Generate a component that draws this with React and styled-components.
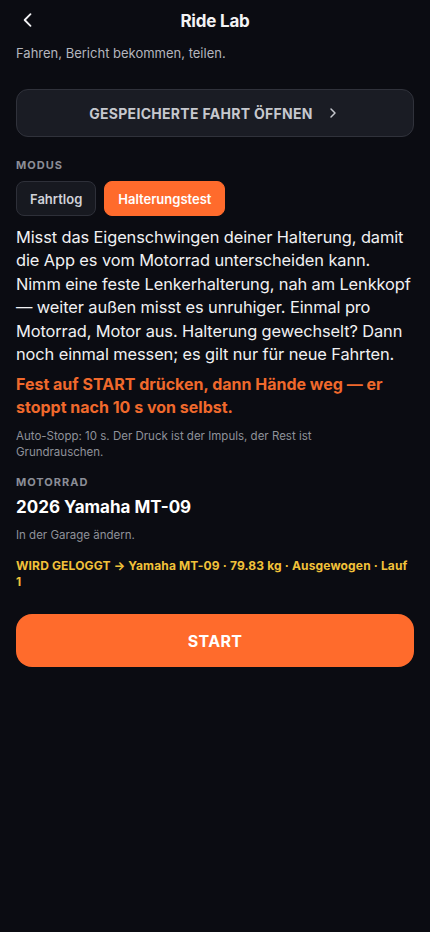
import styled, { createGlobalStyle } from "styled-components";

const Global = createGlobalStyle`
  html, body {
    margin: 0;
    padding: 0;
    background: #0b0c12;
  }
  body {
    font-family: Inter, "Noto Sans", sans-serif;
    color: #f3f3f5;
  }
`;

const Screen = styled.main`
  min-height: 932px;
  background: #0b0c12;
  padding: 0 16px;
  box-sizing: border-box;
`;

const Header = styled.header`
  height: 41px;
  display: flex;
  align-items: center;
  justify-content: center;
  position: relative;
`;

const Back = styled.button`
  position: absolute;
  left: 2px;
  top: 9px;
  width: 20px;
  height: 22px;
  padding: 0;
  border: 0;
  background: none;
  color: #f3f3f5;
  display: flex;
  align-items: center;
`;

const HeaderTitle = styled.h1`
  margin: 0;
  font-size: 17px;
  font-weight: 700;
  letter-spacing: -0.2px;
`;

const Subtitle = styled.p`
  margin: 4px 0 0;
  font-size: 13px;
  color: #b4b6be;
`;

const OpenButton = styled.button`
  margin-top: 28px;
  width: 100%;
  height: 48px;
  border-radius: 12px;
  border: 1px solid #30323b;
  background: #1a1c24;
  color: #c6c8ce;
  font-family: inherit;
  font-size: 14px;
  font-weight: 700;
  letter-spacing: 0.3px;
  display: flex;
  align-items: center;
  justify-content: center;
  gap: 12px;
`;

const Label = styled.div`
  margin-top: ${(p) => p.$top}px;
  font-size: 11px;
  font-weight: 700;
  letter-spacing: 1px;
  color: #8b8e97;
`;

const Chips = styled.div`
  margin-top: 9px;
  display: flex;
  gap: 8px;
`;

const Chip = styled.button`
  height: 35px;
  padding: 0 13px;
  border-radius: 8px;
  font-family: inherit;
  font-size: 13px;
  font-weight: 600;
  border: 1px solid ${(p) => (p.$active ? "#ff6b2c" : "#2e3039")};
  background: ${(p) => (p.$active ? "#ff6b2c" : "#171920")};
  color: ${(p) => (p.$active ? "#ffffff" : "#d0d2d8")};
`;

const Body = styled.p`
  margin: 10px 0 0;
  font-size: 16.4px;
  line-height: 23.4px;
  color: #f1f1f3;
  letter-spacing: -0.1px;
`;

const Warning = styled.p`
  margin: 7px 0 0;
  font-size: 16px;
  line-height: 23px;
  font-weight: 700;
  color: #f0692c;
`;

const Note = styled.p`
  margin: 9px 0 0;
  max-width: 340px;
  font-size: 11.5px;
  line-height: 16px;
  color: #8f929a;
`;

const Bike = styled.h2`
  margin: 8px 0 0;
  font-size: 17px;
  font-weight: 700;
  color: #ffffff;
`;

const Hint = styled(Note)`
  margin-top: 10px;
`;

const Logged = styled.p`
  margin: 15px 0 0;
  font-size: 12px;
  line-height: 16px;
  font-weight: 700;
  letter-spacing: 0.15px;
  color: #f2c23a;
`;

const StartButton = styled.button`
  margin-top: 24px;
  width: 100%;
  height: 53px;
  border: 0;
  border-radius: 16px;
  background: #ff6b2c;
  color: #ffffff;
  font-family: inherit;
  font-size: 16px;
  font-weight: 700;
  letter-spacing: 0.3px;
`;

function Chevron({ dir = "left", size = 20 }) {
  const d = dir === "left" ? "M15 5 L8 12 L15 19" : "M9 6 L15 12 L9 18";
  return (
    <svg width={size} height={size} viewBox="0 0 24 24" fill="none">
      <path d={d} stroke="currentColor" strokeWidth="2.2" strokeLinecap="round" strokeLinejoin="round" />
    </svg>
  );
}

export default function App() {
  return (
    <>
      <Global />
      <Screen>
        <Header>
          <Back aria-label="Zurück">
            <Chevron dir="left" size={22} />
          </Back>
          <HeaderTitle>Ride Lab</HeaderTitle>
        </Header>
        <Subtitle>Fahren, Bericht bekommen, teilen.</Subtitle>

        <OpenButton>
          GESPEICHERTE FAHRT ÖFFNEN
          <Chevron dir="right" size={16} />
        </OpenButton>

        <Label $top={21}>MODUS</Label>
        <Chips>
          <Chip>Fahrtlog</Chip>
          <Chip $active>Halterungstest</Chip>
        </Chips>

        <Body>
          Misst das Eigenschwingen deiner Halterung, damit die App es vom Motorrad
          unterscheiden kann. Nimm eine feste Lenkerhalterung, nah am Lenkkopf — weiter
          außen misst es unruhiger. Einmal pro Motorrad, Motor aus. Halterung gewechselt?
          Dann noch einmal messen; es gilt nur für neue Fahrten.
        </Body>

        <Warning>
          Fest auf START drücken, dann Hände weg — er stoppt nach 10 s von selbst.
        </Warning>

        <Note>Auto-Stopp: 10 s. Der Druck ist der Impuls, der Rest ist Grundrauschen.</Note>

        <Label $top={15}>MOTORRAD</Label>
        <Bike>2026 Yamaha MT-09</Bike>
        <Hint>In der Garage ändern.</Hint>

        <Logged>
          WIRD GELOGGT → Yamaha MT-09 · 79.83 kg · Ausgewogen · Lauf 1
        </Logged>

        <StartButton>START</StartButton>
      </Screen>
    </>
  );
}
